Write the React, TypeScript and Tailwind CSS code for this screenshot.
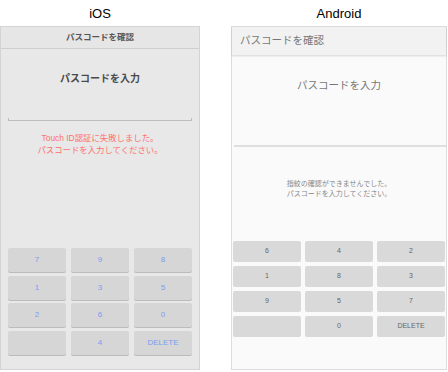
const jp = "font-['Liberation_Sans','Noto_Sans_CJK_JP',sans-serif]";

const iosKeys = ['7', '9', '8', '1', '3', '5', '2', '6', '0', '', '4', 'DELETE'];
const androidKeys = ['6', '4', '2', '1', '8', '3', '9', '5', '7', '', '0', 'DELETE'];

function IosScreen() {
  return (
    <div className="flex h-[344px] w-[200px] flex-col border border-[#d4d4d4] bg-[#e8e8e8]">
      <div className="flex h-[22px] items-center justify-center border-b border-[#cfcfcf] bg-[#e6e6e6]">
        <span className="text-[8.5px] font-bold text-[#555]">パスコードを確認</span>
      </div>
      <div className="flex h-[56px] items-center justify-center pt-[2px]">
        <span className="text-[10px] font-bold text-[#4a4a4a]">パスコードを入力</span>
      </div>
      <div className="mx-[7px] mt-[13px] h-[3px] border-x border-b border-[#bdbdbd]"></div>
      <div className="mt-[11px] flex flex-col items-center text-[8.4px] leading-[12px] text-[#ff6f6f]">
        <p>Touch ID認証に失敗しました。</p>
        <p>パスコードを入力してください。</p>
      </div>
      <div className="mt-auto grid grid-cols-3 gap-x-[5px] gap-y-[3.6px] px-[7px] pb-[14px]">
        {iosKeys.map((k, i) => (
          <div
            key={i}
            className="flex h-[24px] items-center justify-center rounded-[2px] bg-[#d6d6d6] text-[8px] text-[#7b9cf3] shadow-[0_1px_0_#bcbcbc]"
          >
            {k}
          </div>
        ))}
      </div>
    </div>
  );
}

function AndroidScreen() {
  return (
    <div className="flex h-[344px] w-[216px] flex-col border border-[#dcdcdc] bg-[#fafafa]">
      <div className="flex h-[28px] items-center bg-[#f2f2f2] pl-[8px] shadow-[0_1px_2px_rgba(0,0,0,0.15)]">
        <span className="text-[10.5px] text-[#777]">パスコードを確認</span>
      </div>
      <div className="flex h-[62px] items-center justify-center">
        <span className="text-[10.5px] text-[#777]">パスコードを入力</span>
      </div>
      <div className="ml-[2px] mt-[28px] h-[2px] bg-[#dedede]"></div>
      <div className="mt-[32px] flex flex-col items-center text-[7px] leading-[10px] text-[#888]">
        <p>指紋の確認ができませんでした。</p>
        <p>パスコードを入力してください。</p>
      </div>
      <div className="mt-[42px] grid grid-cols-3 gap-[4px] px-[1px]">
        {androidKeys.map((k, i) => (
          <div
            key={i}
            className="flex h-[21px] items-center justify-center rounded-[2px] bg-[#d9d9d9] text-[7px] text-[#666]"
          >
            {k}
          </div>
        ))}
      </div>
    </div>
  );
}

export default function App() {
  return (
    <div className={`h-[372px] w-[448px] bg-white ${jp}`}>
      <div className="flex h-[26px] items-center pt-[2px]">
        <p className="w-[200px] text-center text-[13px] text-black">iOS</p>
        <p className="ml-[31px] w-[216px] text-center text-[13px] text-black">Android</p>
      </div>
      <div className="flex">
        <IosScreen />
        <div className="ml-[31px]">
          <AndroidScreen />
        </div>
      </div>
    </div>
  );
}
